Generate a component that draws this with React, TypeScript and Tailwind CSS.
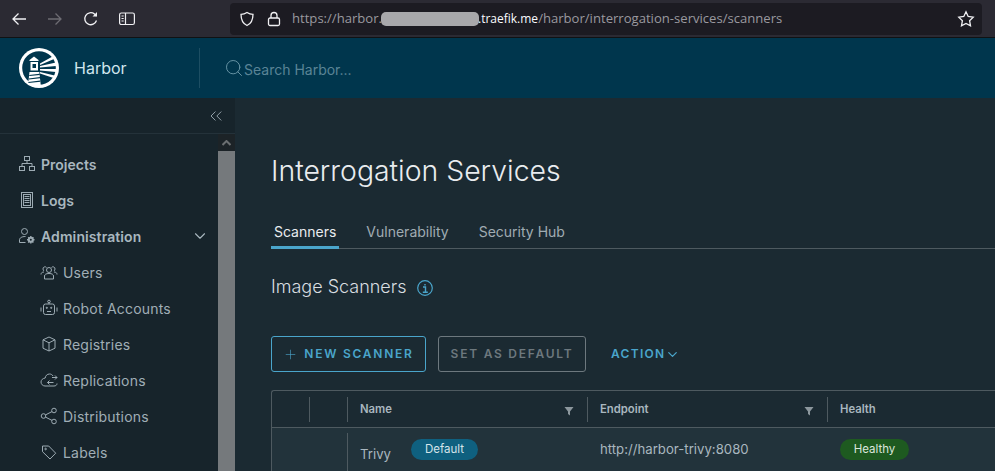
import React from "react";
import { ChevronDown, ChevronsLeft, Search, Plus } from "lucide-react";

const font = { fontFamily: '"Inter","Liberation Sans",sans-serif' };

function Ic({ children }: { children: React.ReactNode }) {
  return (
    <svg width="18" height="18" viewBox="0 0 18 18" fill="none" stroke="#9dabb3" strokeWidth="1" className="shrink-0">
      {children}
    </svg>
  );
}

const Projects = () => (
  <Ic>
    <rect x="6.500" y="1.500" width="5" height="4" />
    <rect x="1.500" y="11.500" width="5" height="4" />
    <rect x="11.500" y="11.500" width="5" height="4" />
    <path d="M9 5.500v3M4 11.500v-3h10v3" />
  </Ic>
);
const Logs = () => (
  <Ic>
    <rect x="3.500" y="1.500" width="11" height="15" />
    <rect x="5.500" y="3.500" width="7" height="11" />
    <path d="M6.500 5.500h5M6.500 7.500h5M6.500 9.500h5M6.500 11.500h5" />
  </Ic>
);
const Admin = () => (
  <Ic>
    <circle cx="6.500" cy="4.500" r="3" />
    <path d="M1.500 15.500v-2.500c0-2 2-3.500 6-3.500" />
    <path d="M1.500 15.500h6" />
    <circle cx="12.800" cy="12.800" r="2" fill="none" stroke="#9dabb3" strokeWidth="2" />
    <path d="M12.800 9v1.500M12.800 15v1.500M9 12.800h1.500M15 12.800h1.500M10.200 10.200l1 1M14.400 14.400l1 1M15.400 10.200l-1 1M11.200 14.400l-1 1" strokeWidth="1.400" />
  </Ic>
);
const Users = () => (
  <Ic>
    <circle cx="9" cy="7" r="2.500" />
    <path d="M4.500 16v-3c0-1.500 1.500-2.500 4.500-2.500s4.500 1 4.500 2.500v3z" />
    <path d="M6.500 4.500a2 2 0 0 0-3.500 1.500c0 1 .5 1.500 1 2M1 11.500c0-1.500 1-2.500 3-2.500M11.500 4.500a2 2 0 0 1 3.500 1.500c0 1-.5 1.500-1 2M17 11.500c0-1.500-1-2.500-3-2.500" />
  </Ic>
);
const Robot = () => (
  <Ic>
    <rect x="3.500" y="5" width="11" height="10.500" rx="2" />
    <circle cx="9" cy="2.500" r="1.300" />
    <path d="M9 3.800V5M1 8.500v4M17 8.500v4M7 12.500h4" />
    <circle cx="6.800" cy="8.800" r=".6" fill="#9dabb3" />
    <circle cx="11.200" cy="8.800" r=".6" fill="#9dabb3" />
  </Ic>
);
const Box = () => (
  <Ic>
    <path d="M9 2l6 2.800v8.400L9 16l-6-2.800V4.800z" />
    <path d="M3 4.800L9 7.800l6-3M9 7.800V16" />
  </Ic>
);
const Cloud = () => (
  <Ic>
    <path d="M5 15h9c1.800 0 3-1 3-2.500M13 5C12.200 3.500 10.800 3 9.500 3 7 3 5.500 4.800 5.200 7 2.800 7.300 1 9 1 11s1.700 4 4 4" />
    <path d="M7.500 11.500h6M9.500 9.500l-2 2 2 2M12 6.500h5M15 4.500l2 2-2 2" />
  </Ic>
);
const Share = () => (
  <Ic>
    <circle cx="3.500" cy="9" r="2.300" />
    <circle cx="14" cy="3.500" r="2.300" />
    <circle cx="14" cy="14.500" r="2.300" />
    <path d="M5.500 7.900l6.500-3.300M5.500 10.100l6.500 3.300" />
  </Ic>
);
const Tag = () => (
  <Ic>
    <path d="M2.500 3h6.200l7 7.200-5.700 5.800-7.500-7.300z" />
    <circle cx="5.600" cy="6" r=".8" />
  </Ic>
);

function Filter() {
  return (
    <svg width="10" height="10" viewBox="0 0 10 10" className="mt-[3px] shrink-0">
      <path d="M0.500 1h9L6 5.500V9.500L4 8V5.500z" fill="#8c979d" />
    </svg>
  );
}

function Logo() {
  return (
    <svg width="40" height="40" viewBox="0 0 40 40">
      <circle cx="20" cy="20" r="20" fill="#fff" />
      <circle cx="20" cy="20" r="16.800" fill="#00364d" />
      <path d="M21 15.500L33.500 8.500l1.500 2.500L21 17z M21 18L37 14.500v3.500L21 19.500z M21 21L37 21v3L21 22.500z M21 24L35.500 27.500l-1 2.500L21 25.500z" fill="#fff" />
      <path d="M15 8.500l4.500 3.500v1h-9v-1z" fill="#fff" />
      <path d="M11.500 14h7.500v8.500h-7.500zM13.500 16v4h3.500v-4z" fill="#fff" fillRule="evenodd" />
      <path d="M10.500 24h9.800l1.500 13.500c-4 1-8 .8-12.800-.7z" fill="#fff" />
      <path d="M10.300 27.500l10.500-1.200M9.800 31l11.300-1.300M9.400 34.500l12-1.400" stroke="#00364d" strokeWidth="1.200" />
    </svg>
  );
}

const top = [
  { label: "Projects", icon: <Projects /> },
  { label: "Logs", icon: <Logs /> },
];
const subs = [
  { label: "Users", icon: <Users /> },
  { label: "Robot Accounts", icon: <Robot /> },
  { label: "Registries", icon: <Box /> },
  { label: "Replications", icon: <Cloud /> },
  { label: "Distributions", icon: <Share /> },
  { label: "Labels", icon: <Tag /> },
];

export default function App() {
  return (
    <div className="flex h-[471px] w-[995px] flex-col overflow-hidden bg-[#1b2a32]" style={font}>
      {/* browser chrome */}
      <div className="flex h-[38px] shrink-0 items-center border-b border-[#101214] bg-[#2b2a33] pl-[11px]">
        <svg width="16" height="16" viewBox="0 0 16 16" fill="none" stroke="#f0f0f3" strokeWidth="1.300" className="mr-[20px]">
          <path d="M15 8H2M7.500 2.500L2 8l5.500 5.500" />
        </svg>
        <svg width="16" height="16" viewBox="0 0 16 16" fill="none" stroke="#6d6c73" strokeWidth="1.300" className="mr-[20px]">
          <path d="M1 8h13M8.500 2.500L14 8l-5.500 5.500" />
        </svg>
        <svg width="16" height="16" viewBox="0 0 16 16" fill="none" stroke="#f0f0f3" strokeWidth="1.300" className="mr-[20px]">
          <path d="M13.500 9.500A6 6 0 1 1 11.500 3l2 2" />
          <path d="M14 1v4.500H9.500" fill="#f0f0f3" stroke="none" />
        </svg>
        <svg width="16" height="16" viewBox="0 0 16 16" fill="none" stroke="#f0f0f3" strokeWidth="1.200">
          <rect x="0.600" y="2" width="14.800" height="11.500" rx="1.800" />
          <path d="M6.500 2v11.500M2.500 5h2.200M2.500 7.500h2.200M2.500 10h2.200" />
        </svg>
        <div className="ml-[95px] flex h-[32px] w-[752px] shrink-0 items-center rounded-[4px] bg-[#1c1b22] pl-[9px] text-[13.100px] text-[#9a999f]" style={{ fontFamily: '"Open Sans",sans-serif' }}>
          <svg width="16" height="16" viewBox="0 0 16 16" fill="none" stroke="#f0f0f3" strokeWidth="1.300" className="mr-[12px] shrink-0">
            <path d="M8 1.500c2 1.300 4 1.800 6 1.800 0 5.500-2 9.500-6 11.200C4 12.800 2 8.800 2 3.300c2 0 4-.5 6-1.800z" />
          </svg>
          <svg width="14" height="16" viewBox="0 0 14 16" fill="none" stroke="#f0f0f3" strokeWidth="1.300" className="mr-[11px] shrink-0">
            <rect x="1.500" y="7" width="11" height="7.500" rx="1.500" />
            <path d="M4 7V4.500a3 3 0 0 1 6 0V7" />
          </svg>
          <span>https://harbor.</span>
          <span className="mx-[-1px] h-[14px] w-[98px] rounded-[5px] bg-[#a8a8ab]" />
          <span className="text-[12px] text-[#fbfbfe]">.traefik.me</span>
          <span>/harbor/interrogation-services/scanners</span>
          <svg width="18" height="18" viewBox="0 0 18 18" fill="none" stroke="#f0f0f3" strokeWidth="1.300" className="ml-auto mr-[7px]">
            <path d="M9 1.800l2.200 4.700 5 .7-3.600 3.500.9 5.100L9 13.400l-4.500 2.400.9-5.100L1.800 7.200l5-.7z" />
          </svg>
        </div>
      </div>

      {/* app header */}
      <div className="flex h-[60px] shrink-0 items-center bg-[#00364d] pl-[19px]">
        <Logo />
        <span className="ml-[15px] w-[125px] text-[16px] text-[#d0e6ee]">Harbor</span>
        <div className="h-[40px] w-px bg-[#1d4e63]" />
        <Search size={20} strokeWidth={1.100} color="#6f9aab" className="ml-[24px]" />
        <span className="mt-[3px] text-[14px] text-[#5a8496]">Search Harbor...</span>
      </div>

      <div className="flex min-h-0 flex-1">
        {/* sidebar */}
        <div className="flex w-[235px] shrink-0 flex-col bg-[#17242b]">
          <div className="flex h-[36px] shrink-0 items-center justify-end border-b border-[#24323a] pr-[9px]">
            <ChevronsLeft size={20} strokeWidth={1} color="#a9b7bf" />
          </div>
          <div className="flex min-h-0 flex-1">
            <div className="flex-1 pt-[12px]">
              {top.map((t) => (
                <div key={t.label} className="flex h-[36px] items-center gap-[5px] pl-[18px] text-[14px] font-semibold text-[#a9b7bf]">
                  {t.icon}
                  {t.label}
                </div>
              ))}
              <div className="flex h-[36px] items-center gap-[5px] pl-[18px] pr-[9px] text-[14px] font-semibold tracking-[0.100px] text-[#a9b7bf]">
                <Admin />
                Administration
                <ChevronDown size={18} strokeWidth={1.500} className="ml-auto" />
              </div>
              {subs.map((s) => (
                <div key={s.label} className="flex h-[36px] items-center gap-[5px] pl-[40px] text-[14px] tracking-[0.200px] text-[#a0aeb6]">
                  {s.icon}
                  {s.label}
                </div>
              ))}
            </div>
            <div className="flex w-[17px] shrink-0 flex-col bg-[#75797c]">
              <div className="flex h-[17px] items-center justify-center bg-[#1c2327]">
                <svg width="9" height="6" viewBox="0 0 9 6">
                  <path d="M0.500 5L4.500 1l4 4" fill="none" stroke="#6b6f71" strokeWidth="2" />
                </svg>
              </div>
            </div>
          </div>
        </div>

        {/* content */}
        <div className="min-w-0 flex-1 pl-[36px]">
          <h1 className="mt-[55px] text-[28.400px] leading-[36px] font-light text-[#e9ecef]">Interrogation Services</h1>
          <div className="mt-[28px] flex h-[32px] items-start border-b border-[#4e5a60] text-[14px]">
            <div className="flex h-[32px] items-center border-b-[3px] border-[#4aa5cb] px-[3px] pb-[1px] text-[#e9ecef]">Scanners</div>
            <div className="ml-[27px] flex h-[28px] items-center text-[#a0acb2]">Vulnerability</div>
            <div className="ml-[30px] flex h-[28px] items-center text-[#a0acb2]">Security Hub</div>
          </div>
          <div className="mt-[23px] flex h-[28px] items-center text-[18px] font-light text-[#d9dee1]">
            Image Scanners
            <svg width="18" height="18" viewBox="0 0 18 18" fill="none" className="ml-[9px] mt-[3px]">
              <circle cx="9" cy="9" r="7.300" stroke="#4aa5cb" strokeWidth="1.200" />
              <path d="M7 8h2.500v5M6.800 13.200h5M9 5v1.500" stroke="#4aa5cb" strokeWidth="1.400" />
            </svg>
          </div>
          <div className="mt-[36px] flex items-center text-[12px] font-semibold tracking-[1.750px]">
            <div className="flex h-[36px] w-[155px] items-center justify-center gap-[6px] rounded-[3px] border border-[#4aa5cb] text-[#4aa5cb]">
              <Plus size={15} strokeWidth={1} />
              NEW SCANNER
            </div>
            <div className="ml-[12px] flex h-[36px] w-[148px] items-center justify-center rounded-[3px] border border-[#6d787e] text-[#6d787e]">SET AS DEFAULT</div>
            <div className="ml-[25px] flex items-center tracking-[1.300px] text-[#4aa5cb]">
              ACTION
              <ChevronDown size={15} strokeWidth={2} />
            </div>
          </div>
          <div className="mt-[18px] rounded-tl-[3px] border-l border-t border-[#4e5a60]">
            <div className="flex h-[37px] items-center border-b border-[#4e5a60] text-[11.300px] font-semibold text-[#a9b7bf]">
              <div className="h-[25px] w-[38px] border-r border-[#4e5a60]" />
              <div className="h-[25px] w-[38px] border-r border-[#4e5a60]" />
              <div className="flex h-[25px] w-[240px] items-center justify-between border-r border-[#4e5a60] pl-[12px] pr-[13px]">
                Name
                <Filter />
              </div>
              <div className="flex h-[25px] w-[240px] items-center justify-between border-r border-[#4e5a60] pl-[12px] pr-[13px]">
                Endpoint
                <Filter />
              </div>
              <div className="pl-[12px]">Health</div>
            </div>
            <div className="flex h-[43px] items-start bg-[#22333b] text-[13.200px] text-[#a9b7bf]">
              <div className="mt-[5px] w-[76px] self-stretch border-r border-[#4e5a60]" />
              <div className="flex w-[240px] items-start pl-[12px] pt-[11px]">
                <span className="mt-[6px]">Trivy</span>
                <span className="ml-[20px] flex h-[21px] w-[67px] items-center justify-center rounded-full bg-[#0f607f] text-[11.500px] text-[#d5e4ea]">Default</span>
              </div>
              <div className="mt-[11px] flex h-[21px] w-[240px] items-center pl-[12px]">http://harbor-trivy:8080</div>
              <div className="pl-[12px] pt-[11px]">
                <span className="flex h-[21px] w-[69px] items-center justify-center rounded-full bg-[#1e5a20] text-[11.500px] text-[#dbe6dc]">Healthy</span>
              </div>
            </div>
          </div>
        </div>
      </div>
    </div>
  );
}
